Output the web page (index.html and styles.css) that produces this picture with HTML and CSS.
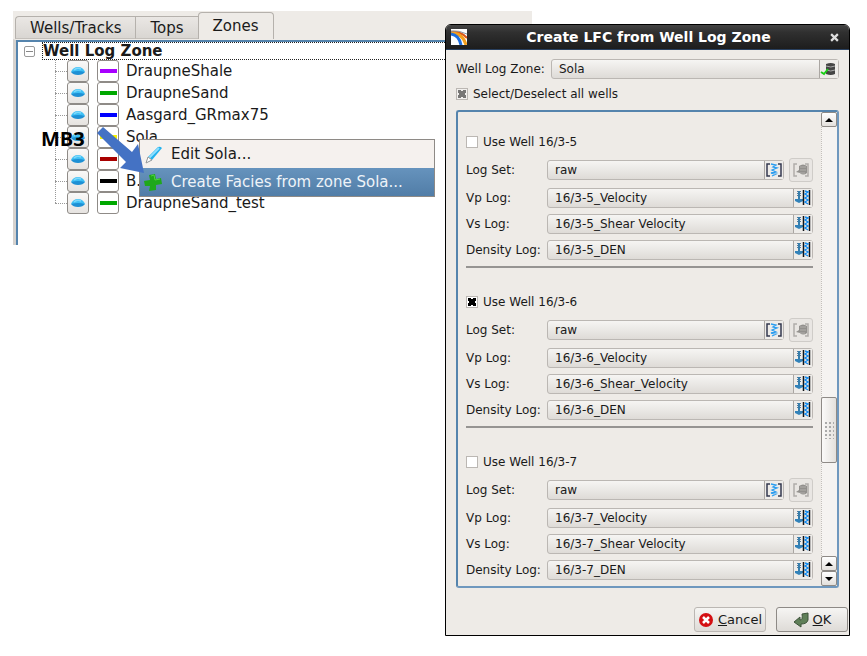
FILE: index.html
```html
<!DOCTYPE html>
<html lang="en">
<head>
<meta charset="utf-8">
<title>Create LFC from Well Log Zone</title>
<link rel="stylesheet" href="styles.css">
</head>
<body>
<svg class="defs" aria-hidden="true">
  <symbol id="eye" viewBox="0 0 16 16">
    <path d="M1 9 Q3 4 8 4 Q13 4 15 9 Z" fill="#3fc0f5"/>
    <path d="M1 9 Q8 7 15 9 Q13 12 8 12 Q3 12 1 9Z" fill="#1e90d4"/>
    <path d="M4 7 Q7 4 11 6" stroke="#7fd8fb" stroke-width="1.5" fill="none"/>
  </symbol>
  <symbol id="curve" viewBox="0 0 18 18">
    <path d="M5 3H2V15H5M13 3H16V15H13" fill="none" stroke="#34384f" stroke-width="1.5"/>
    <path d="M6 3L11 4L8 6L12 7L7 9L11 11L6 12L11 13L7 15" fill="none" stroke="#2a9df0" stroke-width="1.3"/>
  </symbol>
  <symbol id="log" viewBox="0 0 18 18">
    <path d="M3 2.500H7M3 4.500H7M3 6.500H7" stroke="#54799b" stroke-width="1"/>
    <path d="M5 2V12" stroke="#377eac" stroke-width="2"/>
    <path d="M1 10H9V12L5 14L1 12Z" fill="#3282b9"/>
    <path d="M9.500 1V16M15.500 1V16" stroke="#101216" stroke-width="1.500"/>
    <path d="M11 2L14 3L11 5L14 7L11 9L14 11L11 13L14 15" fill="none" stroke="#158cf0" stroke-width="1.500"/>
  </symbol>
  <symbol id="setdb" viewBox="0 0 18 18">
    <path d="M5 3H2V15H5M13 3H16V15H13" fill="none" stroke="#b0adaa" stroke-width="1.500"/>
    <path d="M7 5Q11 2 15 5V12Q11 15 8 12L4 11L7 9Z" fill="#92908d"/>
    <path d="M8 6H14M8 9H14M8 12H13" stroke="#b2afac" stroke-width="1"/>
  </symbol>
</svg>
<main class="scene">
  <section class="explorer">
    <nav class="tabs">
      <button class="tab">Wells/Tracks</button><button class="tab">Tops</button><button class="tab tab-active">Zones</button>
    </nav>
    <div class="tree">
      <div class="root"><button class="fold" aria-label="Collapse"></button><span class="root-name">Well Log Zone</span></div>
      <ul class="zones">
        <li><button class="cell" aria-label="Show"><svg><use href="#eye"/></svg></button><button class="cell swatch" aria-label="Colour"><i class="line purple"></i></button><span>DraupneShale</span></li>
        <li><button class="cell" aria-label="Show"><svg><use href="#eye"/></svg></button><button class="cell swatch" aria-label="Colour"><i class="line green"></i></button><span>DraupneSand</span></li>
        <li><button class="cell" aria-label="Show"><svg><use href="#eye"/></svg></button><button class="cell swatch" aria-label="Colour"><i class="line blue"></i></button><span>Aasgard_GRmax75</span></li>
        <li><button class="cell" aria-label="Show"><svg><use href="#eye"/></svg></button><button class="cell swatch" aria-label="Colour"><i class="line yellow"></i></button><span>Sola</span></li>
        <li><button class="cell" aria-label="Show"><svg><use href="#eye"/></svg></button><button class="cell swatch" aria-label="Colour"><i class="line red"></i></button><span>T</span></li>
        <li><button class="cell" aria-label="Show"><svg><use href="#eye"/></svg></button><button class="cell swatch" aria-label="Colour"><i class="line black"></i></button><span>B.</span></li>
        <li><button class="cell" aria-label="Show"><svg><use href="#eye"/></svg></button><button class="cell swatch" aria-label="Colour"><i class="line green"></i></button><span>DraupneSand_test</span></li>
      </ul>
    </div>
    <div class="menu" role="menu">
      <button class="item" role="menuitem"><svg viewBox="0 0 20 20"><path d="M2 19L4 13L14 3Q16 2 18 4L8 16Z" fill="#22b2ee"/><path d="M5 14L15 4" stroke="#8fe0ff" stroke-width="2"/><path d="M2 19L4 13L8 16Z" fill="#fff" stroke="#999"/></svg>Edit Sola...</button>
      <button class="item item-on" role="menuitem"><svg viewBox="0 0 20 20"><path d="M5 3L11 2L12 7L17 6L18 12L12 13L12 18L5 19L6 14L1 14L0 9L6 8Z" fill="#1fa81b"/><path d="M7 4L10 3L11 8L16 7" fill="none" stroke="#4bd43c"/></svg>Create Facies from zone Sola...</button>
    </div>
    <strong class="note">MB3</strong>
    <svg class="arrow" viewBox="0 0 50 50"><path d="M7 0L36 25L42 17L48 46L24 41L30 35L1 6Z" fill="#4472c4"/></svg>
  </section>

  <section class="dialog" role="dialog" aria-labelledby="dialog-title">
    <header class="titlebar">
      <svg class="logo" viewBox="0 0 16 16"><path d="M0 0H16V16H0Z" fill="#fff"/><path d="M0 3Q10 2 16 9" fill="none" stroke="#d9571c" stroke-width="2"/><path d="M0 4Q12 4 15 16" fill="none" stroke="#f5a01e" stroke-width="3"/><path d="M0 5Q8 6 10 16" fill="none" stroke="#1d6ee0" stroke-width="3"/><path d="M0 2Q8 1 16 5" fill="none" stroke="#8899a8"/></svg>
      <h1 id="dialog-title">Create LFC from Well Log Zone</h1>
      <button class="close" aria-label="Close"><svg viewBox="0 0 8 8"><path d="M1 1L7 7M7 1L1 7" stroke="#ddd" stroke-width="2"/></svg></button>
    </header>
    <div class="content">
      <div class="zone-row"><label for="zone">Well Log Zone:</label>
        <div class="combo"><input id="zone" value="Sola" readonly><button aria-label="Pick zone"><svg viewBox="0 0 18 18"><path d="M6 4Q11 2 15 4V14Q11 16 6 14Z" fill="#454545"/><path d="M6 6Q11 8 15 6M6 10Q11 12 15 10" fill="none" stroke="#aaa"/><path d="M1 12L4 14L8 9" fill="none" stroke="#1bd018" stroke-width="2"/></svg></button></div>
      </div>
      <label class="all"><input type="checkbox" class="mixed" checked>Select/Deselect all wells</label>
      <div class="scroll">
        <div class="wells" id="wells"></div>
        <div class="bar">
          <button class="step" aria-label="Up"><i class="up"></i></button>
          <div class="trough"><div class="thumb"><i class="grip"></i></div></div>
          <button class="step" aria-label="Up"><i class="up"></i></button>
          <button class="step" aria-label="Down"><i class="down"></i></button>
        </div>
      </div>
    </div>
    <footer class="actions">
      <button class="action"><svg viewBox="0 0 16 16"><circle cx="8" cy="8" r="7" fill="#d40f12"/><path d="M5 5L11 11M11 5L5 11" stroke="#fff" stroke-width="2.500"/></svg><span><u>C</u>ancel</span></button>
      <button class="action action-ok"><svg viewBox="0 0 16 16"><path d="M9 2L15 1V8Q14 12 8 12V15L1 10L7 5V8Q10 8 9 2Z" fill="#5f7f58" stroke="#3d5239"/></svg><span><u>O</u>K</span></button>
    </footer>
  </section>
</main>
<script src="script.js"></script>
</body>
</html>
```
FILE: script.js
```js
const wells = [
  { name: "16/3-5", shear: "Shear Velocity", used: false },
  { name: "16/3-6", shear: "Shear_Velocity", used: true },
  { name: "16/3-7", shear: "Shear Velocity", used: false }
];

const icon = (name) => `<svg viewBox="0 0 18 18"><use href="#${name}"/></svg>`;

const row = (id, label, value, symbol, extra = "") => `
  <div class="row"><label for="${id}">${label}:</label>
    <div class="combo"><input id="${id}" value="${value}" readonly><button aria-label="Pick">${icon(symbol)}</button></div>${extra}
  </div>`;

document.getElementById("wells").innerHTML = wells.map((w, i) => `
  <section class="well">
    <label class="use"><input type="checkbox" ${w.used ? "checked" : ""}>Use Well ${w.name}</label>
    ${row("set" + i, "Log Set", "raw", "curve", `<button class="square" aria-label="Log set" disabled>${icon("setdb")}</button>`)}
    <div class="logs">
      ${row("vp" + i, "Vp Log", w.name + "_Velocity", "log")}
      ${row("vs" + i, "Vs Log", w.name + "_" + w.shear, "log")}
      ${row("den" + i, "Density Log", w.name + "_DEN", "log")}
      <hr>
    </div>
  </section>`).join("");
```
FILE: styles.css
```css
* { box-sizing: border-box; }
body {
  margin: 0;
  padding: 11px 17px 20px 13px;
  background: #fff;
  color: #1a1a1a;
  font: 12px/20px "DejaVu Sans", sans-serif;
}
button, input { font: inherit; color: inherit; margin: 0; padding: 0; }
svg { display: block; }
.defs { position: absolute; width: 0; height: 0; }
.scene { display: grid; grid-template-columns: 432fr 405fr; align-items: start; }

/* Zone explorer */
.explorer { position: relative; font-size: 15px; }
.tabs {
  display: flex;
  align-items: flex-end;
  height: 28px;
  margin-right: -87px;
  padding-left: 2px;
  background: #eeebe7;
}
.tab {
  height: 23px;
  padding: 0 14px;
  border: 1px solid #b5b1ac;
  border-bottom-color: #c4c0bb;
  border-right: 0;
  background: linear-gradient(#eae7e4, #d9d6d2);
}
.tab:first-child { border-top-left-radius: 4px; }
.tab-active {
  height: 27px;
  border-right: 1px solid #b5b1ac;
  border-bottom: 0;
  border-radius: 4px 4px 0 0;
  background: #eeebe7;
}
.tree {
  height: 206px;
  border-left: 3px solid #d6d2ce;
  border-top: 1px solid #eeebe7;
  box-shadow: inset 2px 2px #5584ad;
  padding: 2px 0 0 2px;
}
.root { display: flex; align-items: center; height: 18px; padding-left: 6px; }
.fold {
  width: 11px;
  height: 11px;
  margin-right: 7px;
  border: 1px solid #999;
  border-radius: 2px;
  background: linear-gradient(#888, #888) center / 7px 1px no-repeat #fff;
}
.root-name {
  flex: 1;
  font-weight: bold;
  line-height: 16px;
  border: 1px dotted #222;
  border-right: 0;
}
.zones { list-style: none; margin: 0 0 0 37px; padding: 0; position: relative; }
.zones::before {
  content: "";
  position: absolute;
  top: 0;
  bottom: 11px;
  border-left: 1px dotted #999;
}
.zones li { display: flex; align-items: center; height: 22px; }
.zones li::before { content: ""; width: 12px; border-top: 1px dotted #999; }
.zones span { margin-left: 7px; }
.cell {
  display: grid;
  place-items: center;
  width: 22px;
  height: 22px;
  border: 1px solid #8f8b87;
  border-radius: 3px;
  background: linear-gradient(#faf9f8, #e6e3e0);
}
.cell svg { width: 16px; height: 16px; }
.swatch { margin-left: 8px; background: #fff; }
.line { width: 17px; height: 4px; }
.purple { background: #a800ff; }
.green { background: #00a800; }
.blue { background: #00f; }
.yellow { background: #f5f000; }
.red { background: #a80000; }
.black { background: #000; }
.menu {
  position: absolute;
  top: 128px;
  left: 126px;
  width: 296px;
  border: 1px solid #8e8a86;
  background: #f5f1ee;
}
.item {
  display: flex;
  align-items: center;
  width: 100%;
  height: 28px;
  padding-left: 4px;
  border: 0;
  background: none;
}
.item svg { width: 20px; height: 20px; margin-right: 7px; }
.item-on { color: #eef3f8; background: linear-gradient(#6693bd, #517da7); }
.note {
  position: absolute;
  top: 116px;
  left: 28px;
  color: #000;
  font: bold 20px/24px "Open Sans", sans-serif;
}
.arrow { position: absolute; top: 116px; left: 83px; width: 50px; height: 50px; }

/* Dialog */
.dialog {
  position: relative;
  z-index: 1;
  margin-top: 13px;
  border: 1px solid #000;
  border-radius: 6px 6px 0 0;
  background: #eeebe7;
  overflow: hidden;
}
.titlebar {
  display: flex;
  align-items: center;
  height: 25px;
  padding: 0 10px 0 5px;
  border-bottom: 1px solid #29405f;
  background: linear-gradient(#444, #303030 30%, #1d1d1d);
  color: #fff;
}
.logo { width: 16px; height: 16px; }
.titlebar h1 { flex: 1; margin: 0; text-align: center; font-size: 14px; line-height: 20px; }
.close { border: 0; background: none; }
.close svg { width: 9px; height: 9px; }
.content { padding: 9px 10px 0; }
.zone-row { display: flex; align-items: center; }
.zone-row label { flex: 0 0 95px; }
.combo {
  display: flex;
  flex: 1;
  min-width: 0;
  height: 20px;
  border: 1px solid #bbb7b3;
  border-radius: 3px;
  background: linear-gradient(#f6f5f3, #dedbd7);
}
.combo input { flex: 1; min-width: 0; padding: 0 7px; border: 0; background: none; outline: 0; }
.combo button {
  display: grid;
  place-items: center;
  width: 19px;
  border: 0;
  border-left: 1px solid #aaa6a2;
  background: #eeece9;
}
.combo svg, .square svg { width: 18px; height: 18px; }
input[type="checkbox"] {
  appearance: none;
  width: 12px;
  height: 12px;
  margin-right: 5px;
  border: 1px solid #bbb7b3;
  background: #fff;
}
input[type="checkbox"]:checked::before {
  content: "";
  display: block;
  width: 8px;
  height: 8px;
  margin: 1px;
  background:
    linear-gradient(45deg, transparent 36%, #000 36% 64%, transparent 64%),
    linear-gradient(-45deg, transparent 36%, #000 36% 64%, transparent 64%);
}
input.mixed { background: #f2f0ee; }
input.mixed:checked::before { opacity: .5; }
.all, .use { display: flex; align-items: center; height: 20px; }
.all { margin: 5px 0 6px; }
.scroll {
  display: flex;
  height: 478px;
  border: 2px solid #6f98be;
  border-top-color: #5584ad;
  border-left-color: #5584ad;
  border-radius: 3px;
  overflow: hidden;
}
.wells { flex: 1; min-width: 0; padding: 20px 8px 0; }
.well { padding-bottom: 24px; }
.row { display: flex; align-items: center; height: 20px; }
.row label { flex: 0 0 81px; white-space: nowrap; }
.use { margin-bottom: 8px; }
.logs { display: grid; gap: 6px; margin-top: 8px; }
.square {
  display: grid;
  place-items: center;
  width: 24px;
  height: 24px;
  margin-left: 5px;
  border: 1px solid #cfccc8;
  border-radius: 3px;
  background: #e9e6e3;
}
hr { width: 100%; height: 2px; margin: 0; border: 0; background: #969492; }
.bar { display: flex; flex-direction: column; width: 16px; }
.step {
  display: grid;
  place-items: center;
  width: 16px;
  height: 15px;
  border: 1px solid #8e8a86;
  border-radius: 2px;
  background: linear-gradient(#fff, #e3e0dc);
}
.up, .down { border: 4px solid transparent; }
.up { border-top: 0; border-bottom-color: #000; }
.down { border-bottom: 0; border-top-color: #000; }
.trough {
  flex: 1;
  padding-top: 270px;
  border-left: 1px dotted #c4c0bb;
  background: #f5f3f1;
}
.thumb {
  display: grid;
  place-items: center;
  height: 66px;
  margin-left: -1px;
  border: 1px solid #8e8a86;
  border-radius: 2px;
  background: linear-gradient(90deg, #fbfaf9, #e3e0dc);
}
.grip { width: 10px; height: 18px; background: radial-gradient(circle, #aaa 1px, transparent 1px) 0 0 / 4px 4px; }
.actions { display: flex; justify-content: flex-end; gap: 10px; padding: 19px 1px 3px; font-size: 13px; }
.action {
  display: flex;
  align-items: center;
  justify-content: center;
  gap: 4px;
  width: 72px;
  height: 25px;
  border: 1px solid #bbb7b3;
  border-radius: 3px;
  background: linear-gradient(#f6f5f3, #dedbd7);
}
.action svg { width: 16px; height: 16px; }
.action-ok { border-color: #8e8a86; }
```
